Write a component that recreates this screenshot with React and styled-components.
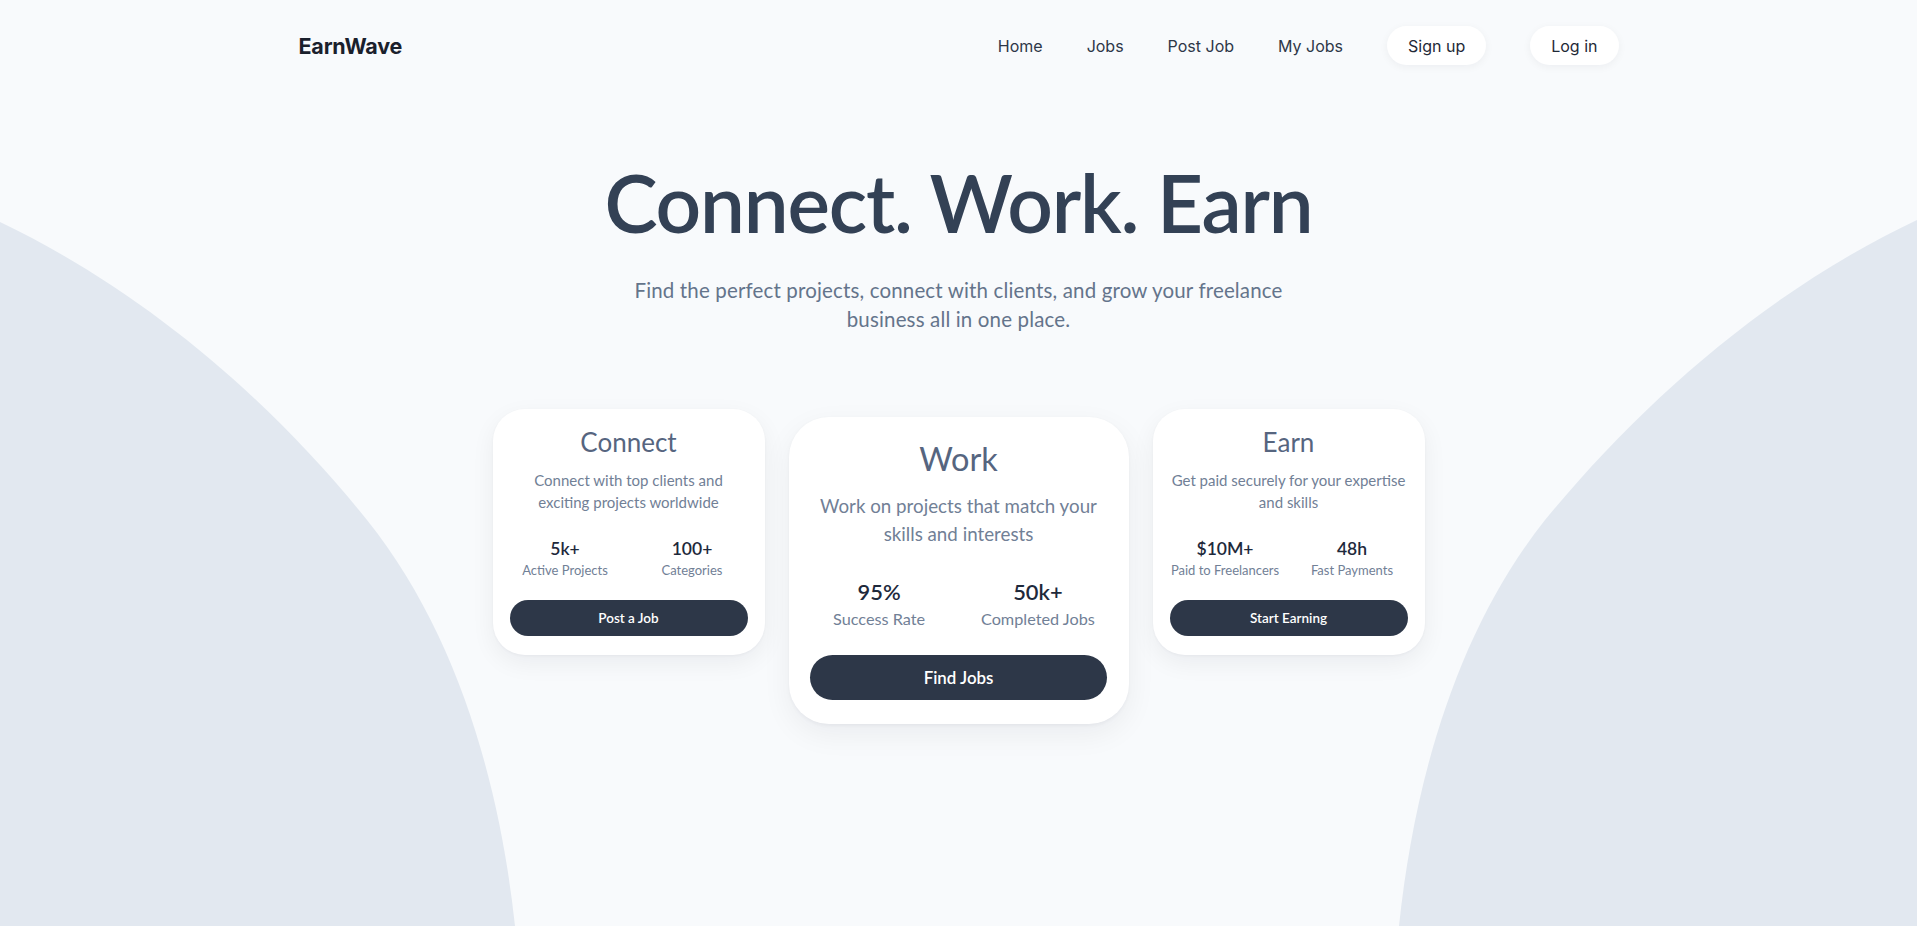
import React from "react";
import styled, { createGlobalStyle } from "styled-components";

const GlobalStyle = createGlobalStyle`
  html, body { margin: 0; padding: 0; }
  body {
    background: #f8fafc;
    font-family: Lato, "Noto Sans", sans-serif;
    -webkit-font-smoothing: antialiased;
  }
  * { box-sizing: border-box; }
`;

const Page = styled.div`
  position: relative;
  min-height: 100vh;
  overflow: hidden;
  background: #f8fafc;
`;

const Backdrop = styled.svg`
  position: absolute;
  inset: 0;
  width: 100%;
  height: 100%;
  z-index: 0;
  pointer-events: none;
`;

const Header = styled.header`
  position: relative;
  z-index: 1;
  max-width: 1320px;
  margin: 0 auto;
  padding: 26px 0;
  display: flex;
  align-items: center;
  justify-content: space-between;
`;

const Logo = styled.a`
  font-family: Inter, sans-serif;
  font-weight: 700;
  font-size: 21.5px;
  letter-spacing: -0.2px;
  color: #1a202c;
  text-decoration: none;
`;

const Nav = styled.nav`
  display: flex;
  align-items: center;
  gap: 44px;
`;

const NavLink = styled.a`
  font-family: Inter, sans-serif;
  font-size: 16px;
  color: #2d3748;
  text-decoration: none;
`;

const PillButton = styled.button`
  font-family: Inter, sans-serif;
  font-size: 16px;
  color: #1f2937;
  background: #ffffff;
  border: none;
  border-radius: 999px;
  height: 39px;
  padding: 0 21px;
  box-shadow: 0 2px 8px rgba(15, 23, 42, 0.05);
  cursor: pointer;
`;

const Hero = styled.main`
  position: relative;
  z-index: 1;
  display: flex;
  flex-direction: column;
  align-items: center;
  text-align: center;
  padding-top: 67px;
`;

const Title = styled.h1`
  margin: 0;
  font-family: Lato, sans-serif;
  font-weight: 600;
  font-size: 80px;
  line-height: 1.1;
  letter-spacing: -1.2px;
  color: #334155;
`;

const Subtitle = styled.p`
  margin: 30px 0 0;
  max-width: 690px;
  font-size: 20.5px;
  line-height: 29px;
  letter-spacing: 0.15px;
  color: #64748b;
`;

const CardRow = styled.section`
  display: flex;
  justify-content: center;
  align-items: flex-start;
  gap: 24px;
  margin-top: 75px;
`;

const Card = styled.article`
  width: 272px;
  padding: 18px 17px 19px;
  background: #ffffff;
  border-radius: 32px;
  box-shadow: 0 8px 24px rgba(15, 23, 42, 0.06), 0 1px 3px rgba(15, 23, 42, 0.04);
  display: flex;
  flex-direction: column;
  align-items: stretch;
  text-align: center;
  ${(p) => (p.$featured ? "zoom: 1.25; margin-top: 6.4px;" : "")}
`;

const CardTitle = styled.h2`
  margin: 0;
  font-weight: 400;
  font-size: 26px;
  line-height: 31px;
  color: #56657f;
`;

const CardText = styled.p`
  margin: 11px 0 0;
  font-size: 15px;
  line-height: 22px;
  color: #718096;
`;

const Stats = styled.div`
  display: grid;
  grid-template-columns: 1fr 1fr;
  column-gap: 16px;
  margin-top: 25.5px;
`;

const Stat = styled.div`
  display: flex;
  flex-direction: column;
  align-items: center;
  gap: 3px;
`;

const StatValue = styled.span`
  font-weight: 600;
  font-size: 17.5px;
  line-height: 20px;
  color: #1e293b;
`;

const StatLabel = styled.span`
  font-size: 13px;
  line-height: 17px;
  color: #718096;
`;

const CardButton = styled.button`
  margin-top: 21px;
  height: 36px;
  width: 100%;
  border: none;
  border-radius: 999px;
  background: #2d3748;
  color: #ffffff;
  font-family: Lato, sans-serif;
  font-weight: 600;
  font-size: 13.5px;
  cursor: pointer;
`;

const cards = [
  {
    title: "Connect",
    text: "Connect with top clients and exciting projects worldwide",
    stats: [
      ["5k+", "Active Projects"],
      ["100+", "Categories"],
    ],
    action: "Post a Job",
  },
  {
    title: "Work",
    text: "Work on projects that match your skills and interests",
    stats: [
      ["95%", "Success Rate"],
      ["50k+", "Completed Jobs"],
    ],
    action: "Find Jobs",
    featured: true,
  },
  {
    title: "Earn",
    text: "Get paid securely for your expertise and skills",
    stats: [
      ["$10M+", "Paid to Freelancers"],
      ["48h", "Fast Payments"],
    ],
    action: "Start Earning",
  },
];

export default function App() {
  return (
    <Page>
      <GlobalStyle />
      <Backdrop viewBox="0 0 1917 926" preserveAspectRatio="none" aria-hidden="true">
        <path
          fill="#e2e8f0"
          d="M0,222 C142,290 268,397 367,520 C457,632.5 499.6,783 515,926 L0,926 Z"
        />
        <path
          fill="#e2e8f0"
          d="M1917,220 C1773,288 1646,397 1545,520 C1456,632 1414,783 1399,926 L1917,926 Z"
        />
      </Backdrop>
      <Header>
        <Logo href="#">EarnWave</Logo>
        <Nav>
          <NavLink href="#">Home</NavLink>
          <NavLink href="#">Jobs</NavLink>
          <NavLink href="#">Post Job</NavLink>
          <NavLink href="#">My Jobs</NavLink>
          <PillButton>Sign up</PillButton>
          <PillButton>Log in</PillButton>
        </Nav>
      </Header>
      <Hero>
        <Title>Connect. Work. Earn</Title>
        <Subtitle>
          Find the perfect projects, connect with clients, and grow your freelance business all in one place.
        </Subtitle>
        <CardRow>
          {cards.map((c) => (
            <Card key={c.title} $featured={c.featured}>
              <CardTitle>{c.title}</CardTitle>
              <CardText>{c.text}</CardText>
              <Stats>
                {c.stats.map(([v, l]) => (
                  <Stat key={l}>
                    <StatValue>{v}</StatValue>
                    <StatLabel>{l}</StatLabel>
                  </Stat>
                ))}
              </Stats>
              <CardButton>{c.action}</CardButton>
            </Card>
          ))}
        </CardRow>
      </Hero>
    </Page>
  );
}
